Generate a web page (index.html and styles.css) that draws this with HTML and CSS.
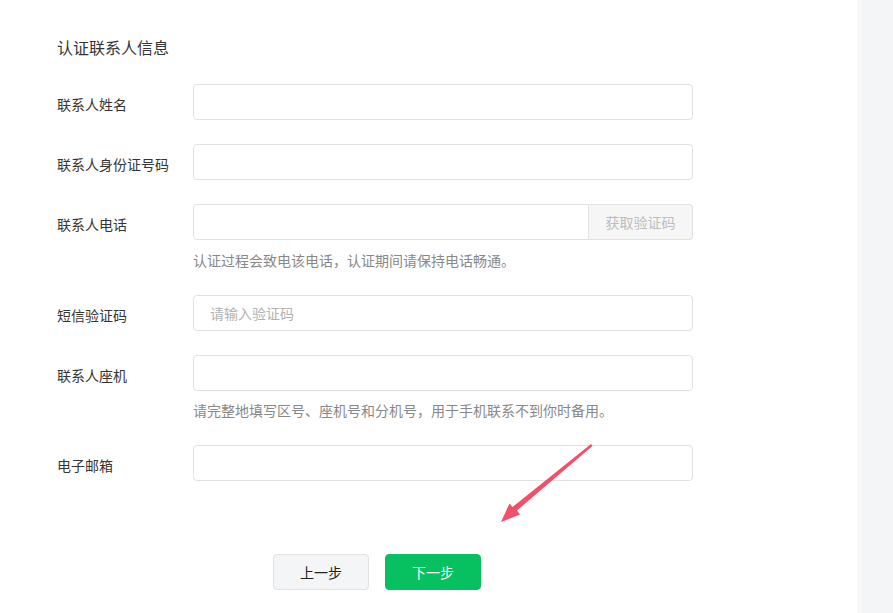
FILE: index.html
```html
<!DOCTYPE html>
<html lang="zh-CN">
<head>
<meta charset="utf-8">
<title>认证联系人信息</title>
<link rel="stylesheet" href="styles.css">
</head>
<body>
<div class="page">
  <main class="main">
    <h2 class="title">认证联系人信息</h2>
    <div class="form">
      <div class="group">
        <div class="row">
          <label class="label">联系人姓名</label>
          <input class="input" type="text">
        </div>
      </div>
      <div class="group">
        <div class="row">
          <label class="label">联系人身份证号码</label>
          <input class="input" type="text">
        </div>
      </div>
      <div class="group">
        <div class="row">
          <label class="label">联系人电话</label>
          <div class="input-group">
            <input class="input input-join" type="text">
            <button class="code-btn" type="button">获取验证码</button>
          </div>
        </div>
        <p class="hint">认证过程会致电该电话，认证期间请保持电话畅通。</p>
      </div>
      <div class="group">
        <div class="row">
          <label class="label">短信验证码</label>
          <input class="input" type="text" placeholder="请输入验证码">
        </div>
      </div>
      <div class="group">
        <div class="row">
          <label class="label">联系人座机</label>
          <input class="input" type="text">
        </div>
        <p class="hint hint-tight">请完整地填写区号、座机号和分机号，用于手机联系不到你时备用。</p>
      </div>
      <div class="group group-last">
        <div class="row">
          <label class="label">电子邮箱</label>
          <input class="input" type="text">
        </div>
      </div>
    </div>
    <div class="actions">
      <button class="btn btn-default" type="button">上一步</button>
      <button class="btn btn-primary" type="button">下一步</button>
    </div>
    <svg class="arrow" width="110" height="90" viewBox="0 0 110 90">
      <path d="M100 3 L101.5 5 L26 69.5 L29 73.5 L10 81 L18.5 62.5 L21.5 66 Z" fill="#f2506a"/>
    </svg>
  </main>
  <aside class="side"></aside>
</div>
</body>
</html>
```

FILE: styles.css
```css
* { box-sizing: border-box; }
html, body {
  margin: 0;
  padding: 0;
  background: #fff;
}
body {
  font-family: "Microsoft YaHei", "Noto Sans CJK SC", "Noto Sans", sans-serif;
  color: #333;
  font-size: 14px;
}
.page {
  display: flex;
  width: 893px;
  min-height: 613px;
}
.main {
  position: relative;
  flex: 1;
  padding: 35px 0 0 57px;
}
.side {
  width: 36px;
  background: #f4f5f7;
  border-left: 5px solid #f7f8f9;
}
.title {
  margin: 0 0 25px;
  font-size: 16px;
  font-weight: normal;
  line-height: 24px;
  color: #353535;
}
.group {
  margin-bottom: 24px;
}
.group-last {
  margin-bottom: 0;
}
.row {
  display: flex;
  align-items: center;
  height: 36px;
}
.label {
  width: 136px;
  flex: none;
  font-size: 14px;
  color: #353535;
  padding-top: 3px;
}
.input {
  width: 500px;
  height: 36px;
  border: 1px solid #e2e2e2;
  border-radius: 4px;
  padding: 0 16px;
  font-family: inherit;
  font-size: 14px;
  color: #333;
  outline: none;
  background: #fff;
}
.input::placeholder {
  color: #b2b2b2;
}
.input-group {
  display: flex;
  width: 500px;
}
.input-join {
  width: 396px;
  border-radius: 4px 0 0 4px;
}
.code-btn {
  width: 104px;
  height: 36px;
  border: 1px solid #e2e2e2;
  border-left: none;
  border-radius: 0 4px 4px 0;
  background: #f6f6f6;
  color: #bdbdbd;
  font-family: inherit;
  font-size: 14px;
  padding: 0;
}
.hint {
  margin: 9px 0 0 136px;
  line-height: 22px;
  font-size: 14px;
  color: #888;
}
.hint-tight {
  margin-top: 8px;
}
.actions {
  display: flex;
  gap: 16px;
  padding-left: 216px;
  margin-top: 73px;
}
.btn {
  width: 96px;
  height: 36px;
  border-radius: 4px;
  font-family: inherit;
  font-size: 14px;
  padding: 0;
}
.btn-default {
  background: #f4f5f7;
  border: 1px solid #e2e2e2;
  color: #222;
}
.btn-primary {
  background: #07c160;
  border: 1px solid #07c160;
  color: #fff;
}
.arrow {
  position: absolute;
  left: 491px;
  top: 441px;
}
```
